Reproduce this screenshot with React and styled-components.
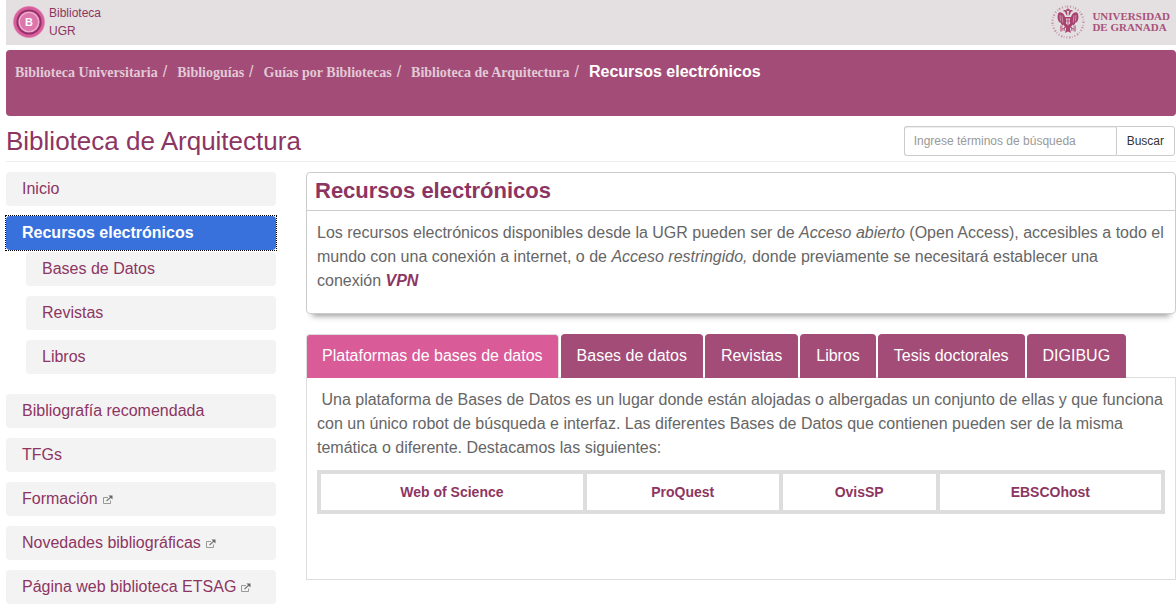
import React from "react";
import styled, { createGlobalStyle, css } from "styled-components";

const purple = "#a24c77";
const wine = "#8d3562";
const sans = '"Liberation Sans", Arial, sans-serif';
const serif = '"Liberation Serif", "Times New Roman", serif';

const Global = createGlobalStyle`
  * { box-sizing: border-box; }
  body { margin: 0; background: #fff; color: #666; font: 16px/24px ${sans}; }
  a { text-decoration: none; }
`;

const Page = styled.div`
  padding-left: 6px;
  overflow-x: clip;
`;

const TopBar = styled.header`
  display: flex;
  justify-content: space-between;
  align-items: center;
  height: 45px;
  padding: 0 6px 2px 7px;
  background: #e4e0e1;
`;

const LibraryLink = styled.a`
  display: flex;
  align-items: center;
  gap: 4px;
  color: ${wine};
  font-size: 12px;
  line-height: 18px;
  svg { display: block; }
`;

const UniversityLink = styled.a`
  display: flex;
  align-items: center;
  gap: 6px;
  color: #a8527c;
  font: bold 11px/11px ${serif};
  white-space: nowrap;
  svg { display: block; }
`;

const Lines = styled.span`
  display: flex;
  flex-direction: column;
`;

const Breadcrumb = styled.nav`
  min-height: 66px;
  margin-top: 5px;
  padding: 10px 9px;
  border-radius: 4px;
  background: ${purple};
`;

const Trail = styled.ol`
  display: flex;
  flex-wrap: wrap;
  margin: 0;
  padding: 0;
  list-style: none;
  line-height: 24px;
`;

const Crumb = styled.li`
  color: #e3c9d6;
  font-size: 16px;
  &:not(:last-child)::after {
    content: "/";
    padding: 0 10px 0 5px;
  }
  a {
    color: #e3c9d6;
    font: bold 14px/24px ${serif};
  }
`;

const Current = styled.strong`
  color: #fff;
`;

const TitleRow = styled.div`
  display: flex;
  justify-content: space-between;
  align-items: center;
  padding: 10px 1px 5px 0;
  border-bottom: 1px solid #eee;
`;

const SiteTitle = styled.h1`
  margin: 0;
  color: ${wine};
  font-size: 26px;
  line-height: 30px;
  font-weight: normal;
`;

const Search = styled.form`
  display: flex;
`;

const SearchInput = styled.input`
  width: 212px;
  height: 30px;
  padding: 0 9px;
  border: 1px solid #ccc;
  border-right: 0;
  border-radius: 3px 0 0 3px;
  box-shadow: inset 0 1px 1px rgba(0, 0, 0, 0.075);
  font: 12px/18px ${sans};
  &::placeholder { color: #999; opacity: 1; }
`;

const SearchButton = styled.button`
  height: 30px;
  padding: 0 10px;
  border: 1px solid #ccc;
  border-radius: 0 3px 3px 0;
  background: #fff;
  color: #333;
  font: 12px/18px ${sans};
`;

const Columns = styled.div`
  display: flex;
  align-items: flex-start;
  gap: 30px;
  margin-top: 10px;
`;

const Sidebar = styled.nav`
  flex: 0 0 270px;
`;

const Menu = styled.ul`
  display: flex;
  flex-direction: column;
  gap: 10px;
  margin: 0;
  padding: 0;
  list-style: none;
`;

const SubMenu = styled(Menu)`
  padding: 2px 0 10px 20px;
`;

const MenuLink = styled.a`
  display: flex;
  align-items: center;
  gap: 5px;
  height: 34px;
  padding: 0 16px;
  border-radius: 4px;
  background: #f3f3f3;
  color: ${wine};
  white-space: nowrap;
  ${(p) =>
    p.$active &&
    css`
      background: #3870dc;
      color: #fff;
      font-weight: bold;
    `}
`;

const FocusRing = styled.div`
  position: relative;
  outline: 1px dotted #000;
`;

const Main = styled.main`
  flex: 1;
  min-width: 0;
`;

const Panel = styled.section`
  border: 1px solid #ccc;
  border-radius: 4px;
  box-shadow: 0 8px 6px -6px #999;
`;

const PanelTitle = styled.h2`
  margin: 0;
  padding: 3px 8px 4px;
  border-bottom: 1px solid #ccc;
  color: ${wine};
  font-size: 22px;
  line-height: 30px;
`;

const PanelBody = styled.div`
  padding: 10px 10px 20px;
  p { margin: 0; }
  a { color: ${wine}; font-weight: bold; font-style: italic; }
`;

const Tabs = styled.div`
  display: flex;
  gap: 2px;
  margin-top: 20px;
`;

const Tab = styled.button`
  height: 44px;
  padding: 0 15px 2px;
  border: 1px solid ${purple};
  border-bottom: 0;
  border-radius: 4px 4px 0 0;
  background: ${purple};
  color: #fff;
  font: 16px/24px ${sans};
  white-space: nowrap;
  ${(p) =>
    p.$active &&
    css`
      border-color: #ddd;
      background: #d95c99;
    `}
`;

const TabPanel = styled.section`
  min-height: 203px;
  margin-top: -1px;
  padding: 10px;
  border: 1px solid #ddd;
  p { margin: 0 0 10px; }
`;

const Platforms = styled.table`
  width: 100%;
  border-collapse: collapse;
  table-layout: fixed;
`;

const Platform = styled.td`
  width: ${(p) => p.$width};
  height: 40px;
  padding: 0;
  border: 4px solid #ddd;
  text-align: center;
  font-size: 14px;
  line-height: 20px;
  font-weight: bold;
  a { color: ${wine}; }
`;

const LibraryLogo = () => (
  <svg width="32" height="32" viewBox="0 0 32 32" aria-hidden="true">
    <circle cx="16" cy="16" r="16" fill="#e48fba" />
    <circle cx="16" cy="16" r="15.2" fill="#d75e9a" />
    <circle cx="16" cy="16" r="12.6" fill="#96306a" />
    <circle cx="16" cy="16" r="10.6" fill="#f0a8cc" />
    <circle cx="16" cy="16" r="9" fill="#dc76ac" />
    <text x="16" y="20" textAnchor="middle" fill="#fff" fontFamily="Liberation Sans, sans-serif" fontWeight="bold" fontSize="11">B</text>
  </svg>
);

const Wing = () => (
  <g>
    <path d="M13.500 14C13 11 12 9 10 7.800 8.500 6.800 6.500 7 6 9c-.6 2-.6 4.500.2 6.500.4 1 1 1.800 1.800 2.300l.5-.8c.2 1.500 1 2.600 2.200 3.600l.6-1c.4 1.200 1.200 1.900 2.200 2.200z" />
    <path d="M15.300 11V8c0-1.800-1-2.700-2.300-2.900-1-.1-1.700.4-1.900 1.100l1.500.4c.8.4.7 1.300 1.200 2.400z" />
    <path d="M8 10l.5 6M10 10.500l.8 7" fill="none" stroke="#e4e0e1" strokeWidth=".5" />
    <path d="M13.500 22l-3.500 2.500M12.500 22.500l-.5 3.500" fill="none" stroke="#a8436f" strokeWidth=".9" />
    <path d="M8 20.500h2.500v6H8z" opacity=".55" />
  </g>
);

const Crest = () => (
  <svg width="36" height="36" viewBox="0 0 36 36" aria-hidden="true">
    <circle cx="18" cy="18" r="15.500" fill="none" stroke="#c391aa" strokeWidth="2.200" strokeDasharray="1 2 .6 1.400 1.400 1.900" />
    <g fill="#a8436f" transform="translate(2 1)">
      <Wing />
      <g transform="matrix(-1 0 0 1 32 0)"><Wing /></g>
      <path d="M14.500 6l-.5-2 1 .5 1-1.500 1 1.500 1-.5-.5 2z" />
      <path d="M13 12h6v10l-3 4-3-4z" />
      <path d="M14 13.500h4v5l-2 2-2-2z" fill="#e5c5d4" />
      <path d="M16 13.500V20M14 16h4" stroke="#a8436f" strokeWidth=".8" />
      <path d="M14.500 22l-1.500 6 3-1.500 3 1.500-1.500-6z" />
    </g>
  </svg>
);

const ExternalIcon = () => (
  <svg width="10" height="9" viewBox="0 0 10 9" fill="none" stroke="#999" role="img" aria-label="enlace externo">
    <path d="M5 2.500H.5v6h7V5.500" />
    <path d="M3.500 6L8 2" stroke="#777" strokeWidth="1.200" />
    <path d="M5.500 .5H9.500v4z" fill="#666" stroke="none" />
  </svg>
);

const trail = ["Biblioteca Universitaria", "Biblioguías", "Guías por Bibliotecas", "Biblioteca de Arquitectura"];
const sections = ["Bases de Datos", "Revistas", "Libros"];
const links = [
  { label: "Bibliografía recomendada" },
  { label: "TFGs" },
  { label: "Formación", external: true },
  { label: "Novedades bibliográficas", external: true },
  { label: "Página web biblioteca ETSAG", external: true },
];
const tabs = ["Plataformas de bases de datos", "Bases de datos", "Revistas", "Libros", "Tesis doctorales", "DIGIBUG"];
const platforms = [
  { label: "Web of Science", width: "31.5%" },
  { label: "ProQuest", width: "23.2%" },
  { label: "OvisSP", width: "18.6%" },
  { label: "EBSCOhost", width: "26.7%" },
];

export default function App() {
  return (
    <>
      <Global />
      <Page>
        <TopBar>
          <LibraryLink href="#">
            <LibraryLogo />
            <Lines>
              <span>Biblioteca</span>
              <span>UGR</span>
            </Lines>
          </LibraryLink>
          <UniversityLink href="#">
            <Crest />
            <Lines>
              <span>UNIVERSIDAD</span>
              <span>DE GRANADA</span>
            </Lines>
          </UniversityLink>
        </TopBar>
        <Breadcrumb aria-label="Ruta">
          <Trail>
            {trail.map((t) => (
              <Crumb key={t}><a href="#">{t}</a></Crumb>
            ))}
            <Crumb><Current>Recursos electrónicos</Current></Crumb>
          </Trail>
        </Breadcrumb>
        <TitleRow>
          <SiteTitle>Biblioteca de Arquitectura</SiteTitle>
          <Search role="search">
            <SearchInput type="text" aria-label="Buscar" placeholder="Ingrese términos de búsqueda" />
            <SearchButton type="button">Buscar</SearchButton>
          </Search>
        </TitleRow>
        <Columns>
          <Sidebar aria-label="Secciones">
            <Menu>
              <li><MenuLink href="#">Inicio</MenuLink></li>
              <li>
                <FocusRing>
                  <MenuLink href="#" $active aria-current="page">Recursos electrónicos</MenuLink>
                </FocusRing>
                <SubMenu>
                  {sections.map((s) => (
                    <li key={s}><MenuLink href="#">{s}</MenuLink></li>
                  ))}
                </SubMenu>
              </li>
              {links.map((l) => (
                <li key={l.label}>
                  <MenuLink href="#">{l.label}{l.external && <ExternalIcon />}</MenuLink>
                </li>
              ))}
            </Menu>
          </Sidebar>
          <Main>
            <Panel>
              <PanelTitle>Recursos electrónicos</PanelTitle>
              <PanelBody>
                <p>
                  Los recursos electrónicos disponibles desde la UGR pueden ser de <em>Acceso abierto</em> (Open
                  Access), accesibles a todo el mundo con una conexión a internet, o de <em>Acceso restringido,</em>{" "}
                  donde previamente se necesitará establecer una conexión <a href="#">VPN</a>
                </p>
              </PanelBody>
            </Panel>
            <Tabs role="tablist">
              {tabs.map((t, i) => (
                <Tab key={t} type="button" role="tab" aria-selected={i === 0} $active={i === 0}>{t}</Tab>
              ))}
            </Tabs>
            <TabPanel role="tabpanel">
              <p>
                &nbsp;Una plataforma de Bases de Datos es un lugar donde están alojadas o albergadas un conjunto de
                ellas y que funciona con un único robot de búsqueda e interfaz. Las diferentes Bases de Datos que
                contienen pueden ser de la misma temática o diferente. Destacamos las siguientes:
              </p>
              <Platforms>
                <tbody>
                  <tr>
                    {platforms.map((p) => (
                      <Platform key={p.label} $width={p.width}><a href="#">{p.label}</a></Platform>
                    ))}
                  </tr>
                </tbody>
              </Platforms>
            </TabPanel>
          </Main>
        </Columns>
      </Page>
    </>
  );
}
